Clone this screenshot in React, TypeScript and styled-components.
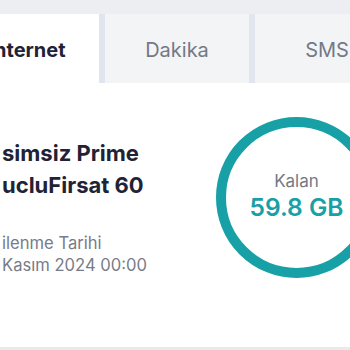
import React from "react";
import styled, { createGlobalStyle } from "styled-components";

const Global = createGlobalStyle`
  html, body { margin: 0; padding: 0; }
  body {
    background: #eceef1;
    font-family: Inter, "Noto Sans", sans-serif;
    overflow: hidden;
  }
`;

const Page = styled.div`
  width: 350px;
  height: 350px;
  overflow: hidden;
  padding-top: 14px;
  box-sizing: border-box;
  display: flex;
  flex-direction: column;
`;

const TabBar = styled.div`
  display: flex;
  gap: 6px;
  margin-left: -45px;
  background: #e1e6ee;
  height: 69px;
  flex-shrink: 0;
`;

const Tab = styled.div<{ $active?: boolean }>`
  width: 144px;
  flex-shrink: 0;
  display: flex;
  align-items: center;
  justify-content: center;
  padding-top: 3px;
  box-sizing: border-box;
  font-size: 20px;
  background: ${(p) => (p.$active ? "#ffffff" : "#f3f4f6")};
  color: ${(p) => (p.$active ? "#1f2335" : "#737985")};
  font-weight: ${(p) => (p.$active ? 700 : 400)};
`;

const Card = styled.div`
  background: #ffffff;
  height: 264px;
  flex-shrink: 0;
  display: flex;
  align-items: flex-start;
  padding-top: 34px;
  box-sizing: border-box;
`;

const Info = styled.div`
  padding-top: 20px;
  padding-left: 2px;
  display: flex;
  flex-direction: column;
`;

const Title = styled.div`
  font-size: 22px;
  line-height: 32px;
  font-weight: 700;
  color: #1f2335;
  white-space: nowrap;
`;

const Meta = styled.div`
  margin-top: 31px;
  font-size: 16.6px;
  line-height: 22px;
  color: #777c88;
  white-space: nowrap;
`;

const Ring = styled.div`
  margin-left: auto;
  margin-right: -27px;
  width: 161px;
  height: 161px;
  flex-shrink: 0;
  box-sizing: border-box;
  border: 10px solid #17a0a6;
  border-radius: 50%;
  display: flex;
  flex-direction: column;
  align-items: center;
  justify-content: center;
  padding-bottom: 4px;
`;

const RingLabel = styled.div`
  font-size: 17px;
  line-height: 22px;
  color: #737985;
`;

const RingValue = styled.div`
  font-size: 24.5px;
  line-height: 30px;
  font-weight: 600;
  color: #17a0a6;
  white-space: nowrap;
`;

const Footer = styled.div`
  flex: 1;
  background: #e8eaed;
`;

export default function App() {
  return (
    <>
      <Global />
      <Page>
        <TabBar>
          <Tab $active>Internet</Tab>
          <Tab>Dakika</Tab>
          <Tab>SMS</Tab>
        </TabBar>
        <Card>
          <Info>
            <Title>
              simsiz Prime
              <br />
              ucluFirsat 60
            </Title>
            <Meta>
              ilenme Tarihi
              <br />
              Kasım 2024 00:00
            </Meta>
          </Info>
          <Ring>
            <RingLabel>Kalan</RingLabel>
            <RingValue>59.8 GB</RingValue>
          </Ring>
        </Card>
        <Footer />
      </Page>
    </>
  );
}
